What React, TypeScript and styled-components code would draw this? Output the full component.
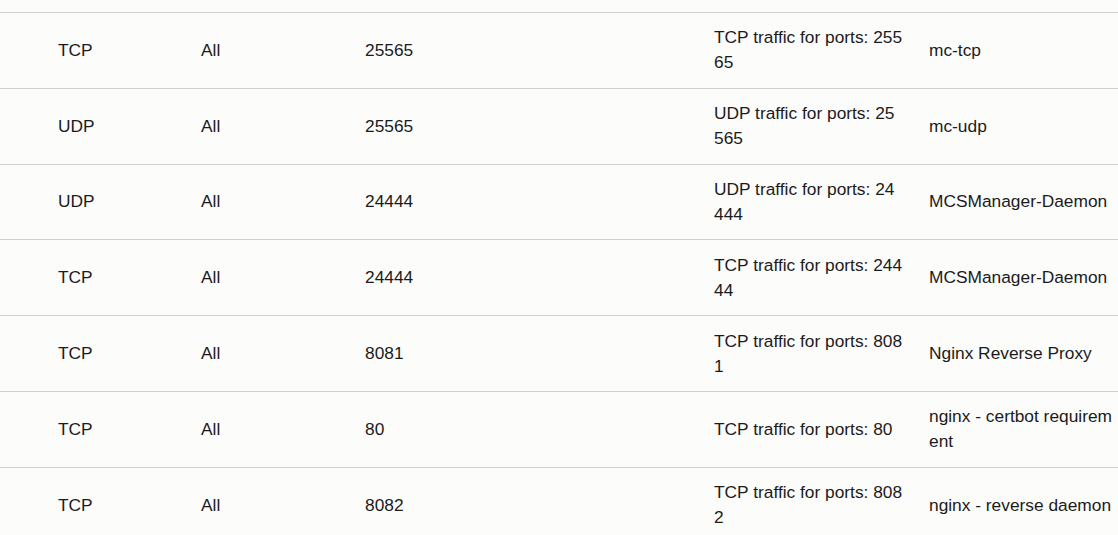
import React from "react";
import styled, { createGlobalStyle } from "styled-components";

const GlobalStyle = createGlobalStyle`
  html, body {
    margin: 0;
    padding: 0;
    background: #fcfcfb;
    overflow: hidden;
  }
  body {
    font-family: "Liberation Sans", Arial, sans-serif;
    color: #1b1b1b;
  }
`;

const Table = styled.div`
  padding-top: 12px;
  width: 1130px;
`;

const Row = styled.div`
  display: grid;
  grid-template-columns: 143px 164px 349px 215px 212px;
  padding-left: 46px;
  border-top: 1px solid #cfcfcf;
  align-items: center;
`;

const Cell = styled.div<{ $wrapRight?: number }>`
  padding: 12.4px ${(p) => p.$wrapRight ?? 12}px 12.4px 12px;
  font-size: 17.33px;
  line-height: 25px;
  word-break: break-all;
`;

type Rule = { proto: string; src: string; port: string; desc: string };

const rules: Rule[] = [
  { proto: "TCP", src: "All", port: "25565", desc: "mc-tcp" },
  { proto: "UDP", src: "All", port: "25565", desc: "mc-udp" },
  { proto: "UDP", src: "All", port: "24444", desc: "MCSManager-Daemon" },
  { proto: "TCP", src: "All", port: "24444", desc: "MCSManager-Daemon" },
  { proto: "TCP", src: "All", port: "8081", desc: "Nginx Reverse Proxy" },
  { proto: "TCP", src: "All", port: "80", desc: "nginx - certbot requirement" },
  { proto: "TCP", src: "All", port: "8082", desc: "nginx - reverse daemon" },
];

export default function App() {
  return (
    <>
      <GlobalStyle />
      <Table>
        {rules.map((r, i) => (
          <Row key={i}>
            <Cell>{r.proto}</Cell>
            <Cell>{r.src}</Cell>
            <Cell>{r.port}</Cell>
            <Cell $wrapRight={14.5}>{`${r.proto} traffic for ports: ${r.port}`}</Cell>
            <Cell>{r.desc}</Cell>
          </Row>
        ))}
      </Table>
    </>
  );
}
